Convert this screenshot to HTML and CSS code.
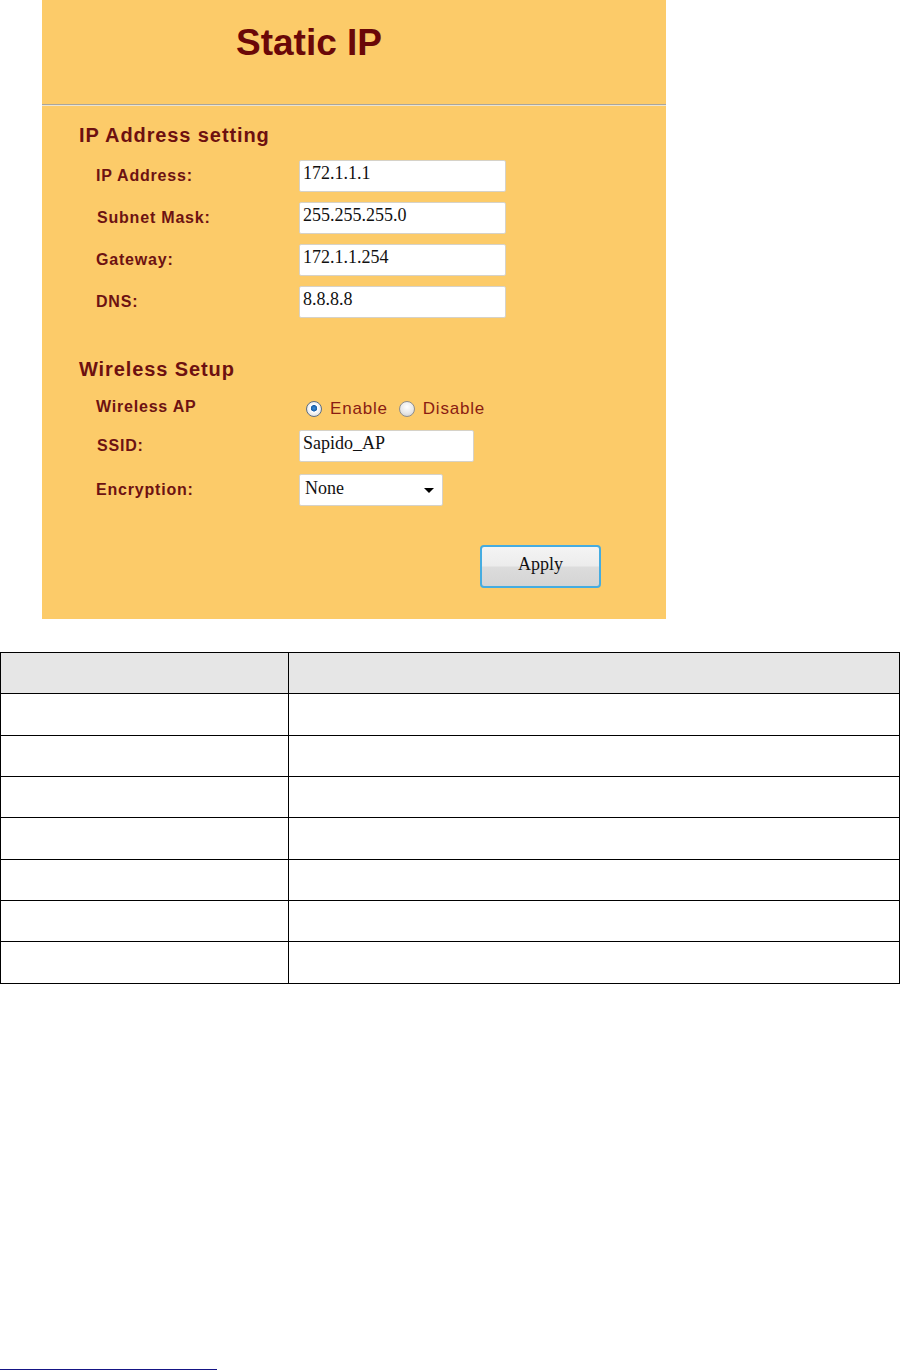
FILE: index.html
```html
<!DOCTYPE html>
<html lang="en">
<head>
    <meta charset="UTF-8">
    <title>Static IP</title>
    <link rel="stylesheet" href="styles.css">
</head>
<body>
    <div class="panel">
        <div class="panel-head">
            <h1>Static IP</h1>
        </div>
        <div class="panel-body">
            <h2 class="section">IP Address setting</h2>
            <div class="rows">
                <div class="row">
                    <label for="ip">IP Address:</label>
                    <input type="text" id="ip" class="field" value="172.1.1.1">
                </div>
                <div class="row">
                    <label for="mask" class="nudge">Subnet Mask:</label>
                    <input type="text" id="mask" class="field" value="255.255.255.0">
                </div>
                <div class="row">
                    <label for="gw">Gateway:</label>
                    <input type="text" id="gw" class="field" value="172.1.1.254">
                </div>
                <div class="row">
                    <label for="dns">DNS:</label>
                    <input type="text" id="dns" class="field" value="8.8.8.8">
                </div>
            </div>

            <h2 class="section second">Wireless Setup</h2>
            <div class="rows wireless">
                <div class="row row-ap">
                    <label>Wireless AP</label>
                    <div class="radios">
                        <input type="radio" name="ap" id="ap-on" checked>
                        <label for="ap-on" class="opt">Enable</label>
                        <input type="radio" name="ap" id="ap-off">
                        <label for="ap-off" class="opt">Disable</label>
                    </div>
                </div>
                <div class="row row-ssid">
                    <label for="ssid" class="nudge">SSID:</label>
                    <input type="text" id="ssid" class="field short" value="Sapido_AP">
                </div>
                <div class="row">
                    <label for="enc">Encryption:</label>
                    <div class="select-wrap">
                        <select id="enc" class="field select">
                            <option>None</option>
                        </select>
                    </div>
                </div>
            </div>
            <div class="actions">
                <button type="button" class="apply">Apply</button>
            </div>
        </div>
    </div>

    <table class="desc">
        <tr class="head"><td class="c1"></td><td></td></tr>
        <tr class="tall"><td class="c1"></td><td></td></tr>
        <tr><td class="c1"></td><td></td></tr>
        <tr><td class="c1"></td><td></td></tr>
        <tr class="tall"><td class="c1"></td><td></td></tr>
        <tr><td class="c1"></td><td></td></tr>
        <tr><td class="c1"></td><td></td></tr>
        <tr class="tall"><td class="c1"></td><td></td></tr>
    </table>

    <div class="footnote-rule"></div>
</body>
</html>
```
FILE: styles.css
```css
body {
    margin: 0;
    font-family: "Liberation Sans", Arial, sans-serif;
    background: #fff;
}
.panel {
    margin-left: 42px;
    width: 624px;
    height: 619px;
    background-color: #fccb69;
}
.panel-head {
    height: 104px;
    border-bottom: 1px solid #aaa69c;
    box-shadow: 0 1px 0 #ece4d2;
}
h1 {
    margin: 0;
    padding: 24px 0 0 194px;
    font-size: 37px;
    line-height: 37px;
    color: #6a0808;
}
.panel-body {
    padding-top: 18px;
}
.section {
    margin: 0;
    padding-left: 37px;
    font-size: 20px;
    line-height: 24px;
    letter-spacing: 0.9px;
    color: #6d1010;
}
.section.second {
    margin-top: 39px;
}
.rows {
    padding-left: 54px;
    margin-top: 13px;
}
.rows.wireless {
    margin-top: 14px;
}
.row {
    display: flex;
    align-items: center;
    height: 32px;
    margin-bottom: 10px;
}
.row label {
    width: 203px;
    font-size: 16px;
    font-weight: bold;
    letter-spacing: 0.8px;
    color: #6d1212;
}
.row label.nudge {
    padding-left: 1px;
    width: 202px;
}
.row-ap {
    height: 24px;
    margin-bottom: 11px;
}
.row-ssid {
    margin-bottom: 12px;
}
.field {
    box-sizing: border-box;
    width: 207px;
    height: 32px;
    margin: 0;
    padding: 0 0 5px 3px;
    border: 1px solid #d6d2c8;
    border-radius: 2px;
    background: #fff;
    font-family: "Liberation Serif", "Times New Roman", serif;
    font-size: 18px;
    color: #111;
    outline: none;
}
.field.short {
    width: 175px;
}
.select-wrap {
    position: relative;
}
.select-wrap::after {
    content: "";
    position: absolute;
    right: 9px;
    top: 14px;
    border-left: 5px solid transparent;
    border-right: 5px solid transparent;
    border-top: 5px solid #000;
    pointer-events: none;
}
.field.select {
    width: 144px;
    padding: 0 0 4px 5px;
    -webkit-appearance: none;
    appearance: none;
}
.radios {
    display: flex;
    align-items: center;
    padding-top: 4px;
}
.radios input[type="radio"] {
    -webkit-appearance: none;
    appearance: none;
    width: 16px;
    height: 16px;
    margin: 0 8px 0 7px;
    border: 1px solid #8e8e8e;
    border-radius: 50%;
    background: radial-gradient(circle at 50% 35%, #ffffff 0%, #e8e8e8 55%, #c8c8c8 100%);
    box-sizing: border-box;
}
.radios input[type="radio"]:checked {
    background: radial-gradient(circle at 50% 45%, #3f8fd8 0%, #1a5fa8 28%, #ffffff 34%, #e6e6e6 70%, #c4c4c4 100%);
    border-color: #5b6e86;
}
.radios input + label.opt {
    width: auto;
    font-weight: normal;
    font-size: 17px;
    letter-spacing: 0.8px;
    color: #8a1c12;
}
.radios #ap-off {
    margin-left: 11px;
}
.actions {
    padding-left: 438px;
    margin-top: 39px;
}
.apply {
    width: 121px;
    height: 43px;
    border: 2px solid #45ace0;
    border-radius: 4px;
    background: linear-gradient(#f4f4f4 0%, #ececec 48%, #dcdcdc 52%, #d4d4d4 100%);
    font-family: "Liberation Serif", "Times New Roman", serif;
    font-size: 18px;
    color: #111;
    padding: 0 0 4px 0;
}
.desc {
    width: 900px;
    margin-top: 33px;
    border-collapse: collapse;
}
.desc td {
    height: 40px;
    padding: 0;
    border: 1px solid #000;
}
.desc tr.tall td {
    height: 41px;
}
.desc td.c1 {
    width: 287px;
}
.desc tr.head td {
    background-color: #e6e6e6;
}
.footnote-rule {
    width: 217px;
    height: 1px;
    margin-top: 385px;
    background-color: #151585;
}
```
